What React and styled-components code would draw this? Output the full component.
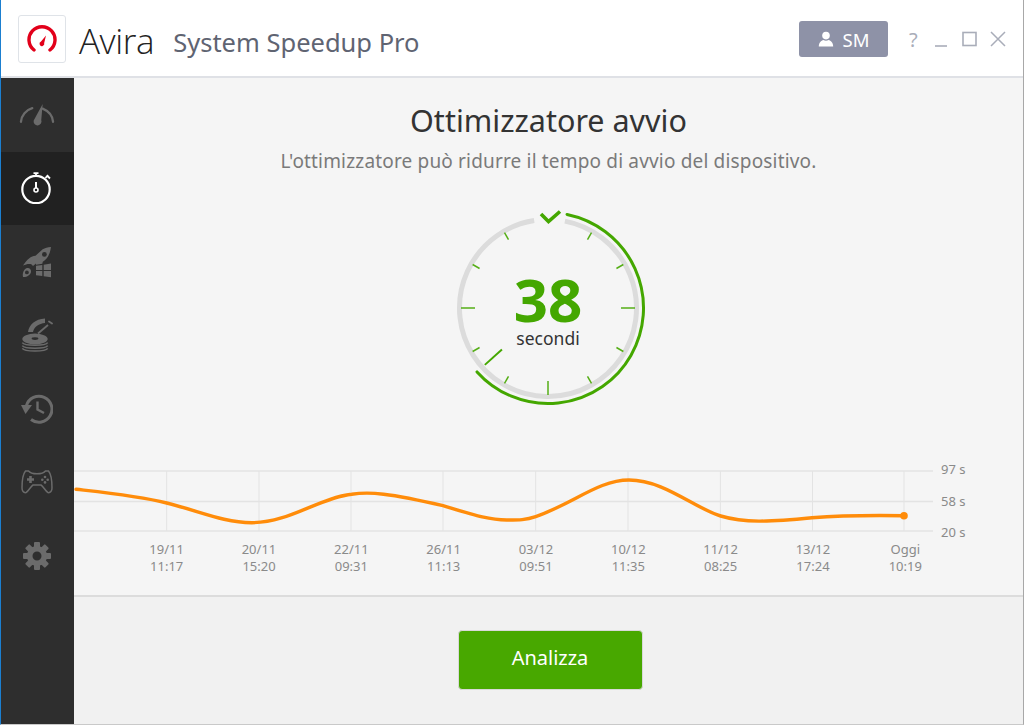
import React from "react";
import styled, { createGlobalStyle } from "styled-components";

const Global = createGlobalStyle`
  html, body { margin: 0; padding: 0; background: #fff; }
  body { font-family: "Noto Sans", "Open Sans", sans-serif; }
  * { box-sizing: border-box; }
`;

const Screen = styled.div`
  width: 1024px; height: 725px; overflow: hidden;
  display: flex; flex-direction: column;
  border-left: 1px solid #1b7fd0;
  border-right: 1px solid #a8a8a8;
  border-bottom: 1px solid #c9c9c9;
  background: #fff;
`;
const Header = styled.header`
  height: 78px; flex: none;
  display: flex; align-items: center;
  padding: 2px 17px 0 17px;
  background: #fff;
  border-bottom: 2px solid #dfe1e6;
`;
const LogoBox = styled.div`
  width: 48px; height: 48px; flex: none;
  border: 1px solid #dfe3e8; border-radius: 3px;
  display: flex; align-items: center; justify-content: center;
  background: #fff;
`;
const Brand = styled.div`
  font-family: "Open Sans", sans-serif; font-weight: 300;
  font-size: 35px; color: #222; margin-left: 13px; letter-spacing: -0.4px;
  transform: translateY(1px);
`;
const Product = styled.div`
  font-size: 25.5px; color: #5f6472; margin-left: 19px;
  transform: translateY(3px);
`;
const Spacer = styled.div` flex: 1; `;
const UserButton = styled.div`
  width: 89px; height: 36px; border-radius: 3px; background: #8e92a7;
  color: #fff; font-size: 18.5px;
  display: flex; align-items: center; justify-content: center; gap: 9px;
`;
const WindowControls = styled.div`
  display: flex; align-items: center; gap: 0; margin-left: 21px; color: #a9adb9;
`;
const HelpMark = styled.span`
  font-size: 20px; width: 25px; color: #a9adb9;
`;
const Body = styled.div`
  flex: 1; display: flex; min-height: 0;
`;
const Sidebar = styled.nav`
  width: 73px; flex: none; background: #2e2e2e;
  display: flex; flex-direction: column;
`;
const NavItem = styled.div`
  height: 73.5px; flex: none; padding-right: 1px;
  display: flex; align-items: center; justify-content: center;
  background: ${p => (p.$active ? "#212121" : "transparent")};
  color: ${p => (p.$active ? "#fff" : "#6b6b6b")};
`;
const Main = styled.main`
  flex: 1; display: flex; flex-direction: column; min-width: 0;
  background: #f5f5f5;
`;
const Content = styled.section`
  height: 519px; flex: none;
  display: flex; flex-direction: column; align-items: center;
  border-bottom: 2px solid #dcdcdc;
  padding-top: 21px;
`;
const Title = styled.h1`
  margin: 0; font-size: 30.5px; font-weight: 400; line-height: 42px; color: #333;
`;
const Subtitle = styled.p`
  margin: 7px 0 0; font-size: 19px; letter-spacing: 0.17px; line-height: 26px; color: #7a7a7a;
`;
const GaugeWrap = styled.div`
  position: relative; width: 200px; height: 200px; margin: 34px 2px 0 0; flex: none;
`;
const GaugeText = styled.div`
  position: absolute; left: 1px; right: 0; top: 64px;
  display: flex; flex-direction: column; align-items: center;
`;
const GaugeValue = styled.div`
  font-size: 60px; line-height: 54px; font-weight: 700; color: #44a700;
`;
const GaugeUnit = styled.div`
  font-size: 17.5px; line-height: 20px; color: #333; margin-top: 2px;
`;
const ChartRow = styled.div`
  align-self: stretch; display: flex; align-items: flex-start; margin-top: 62px; height: 62px;
`;
const ChartSvg = styled.svg`
  width: 859px; height: 62px; flex: none; display: block; overflow: visible;
`;
const YAxis = styled.div`
  margin-left: 8px; height: 79px; margin-top: -9px; display: flex; flex-direction: column;
  justify-content: space-between;
  font-size: 13px; line-height: 16px; color: #8a8a8a;
`;
const XAxis = styled.div`
  align-self: stretch; display: grid;
  grid-template-columns: repeat(9, 92.33px);
  padding-left: 46.5px; margin-top: 8.5px;
`;
const XLabel = styled.div`
  text-align: center; font-size: 13px; line-height: 17px; color: #8a8a8a;
`;
const Footer = styled.footer`
  flex: 1; background: #f1f1f1;
  display: flex; align-items: center; justify-content: center;
`;
const Analyze = styled.button`
  width: 185px; height: 60px; margin: 0 0 2px 3px; padding: 0 0 5px;
  border: 1px solid #d9d9d9; border-radius: 4px;
  background: #48a800; color: #fff; font: inherit; font-size: 20px;
`;

const Logo = () => (
  <svg width="30" height="28" viewBox="0 0 30 28" fill="none">
    <path d="M7 26 A13 13 0 1 1 23 26" stroke="#e2001a" strokeWidth="3.4" strokeLinecap="round" transform="translate(0 -1)" />
    <path d="M14 16.5 L19 10.5 L17.2 18 A2.4 2.4 0 1 1 14 16.5Z" fill="#e2001a" />
  </svg>
);
const UserIcon = () => (
  <svg width="16" height="16" viewBox="0 0 16 16" fill="#fff">
    <circle cx="8" cy="4.6" r="3.8" />
    <path d="M0.8 15.5 C1 11.4 3.2 9.6 5.4 9 C7 10 9 10 10.6 9 C12.8 9.6 15 11.4 15.2 15.5Z" />
  </svg>
);
const Minimize = () => (
  <svg width="26" height="20" viewBox="0 0 26 20"><path d="M1 17H13" stroke="#a9adb9" strokeWidth="1.6" /></svg>
);
const Maximize = () => (
  <svg width="30" height="20" viewBox="0 0 30 20" fill="none"><rect x="3" y="3.5" width="13" height="13" stroke="#a9adb9" strokeWidth="1.6" /></svg>
);
const CloseIcon = () => (
  <svg width="16" height="16" viewBox="0 0 16 16" fill="none"><path d="M1 1L15 15M15 1L1 15" stroke="#a9adb9" strokeWidth="1.5" /></svg>
);

const GaugeNav = () => (
  <svg width="36" height="22.7" viewBox="0 0 38 24" fill="none">
    <path d="M2 20 C2.5 13 7.5 7.5 14 5.5 M25 6 C31 8.5 35.5 13.5 36 20" stroke="currentColor" strokeWidth="2.4" strokeLinecap="round" />
    <path d="M25 1 L23.5 18 A4.2 4.2 0 1 1 15.5 18.5Z" fill="currentColor" />
  </svg>
);
const StopwatchNav = () => (
  <svg width="32" height="32" viewBox="0 0 32 32" fill="none" stroke="currentColor">
    <circle cx="15" cy="17.5" r="13.7" strokeWidth="2.2" />
    <path d="M15 1.5V4M12.5 1.2H17.5M26 3.5L29 6.5M24.5 6L27 3" strokeWidth="1.8" />
    <path d="M15 10V16" strokeWidth="2" />
    <circle cx="15" cy="18" r="2" strokeWidth="1.6" />
  </svg>
);
const RocketNav = () => (
  <svg width="30" height="32" viewBox="0 0 30 32" fill="currentColor">
    <path d="M29 1 C25.5 1.4 23 2 20.7 3.3 L13.5 9.8 C9 10 5 13.5 1 19.6 C4 18 7 17.6 9.3 18.2 L11 20 L14 17.5 L14 18.8 L20.3 17.8 L20.8 15.8 C25.5 13 28 8 29 1Z" />
    <circle cx="22.4" cy="8.4" r="2.4" fill="#2e2e2e" />
    <path d="M5 22 C7.5 21.5 9.5 23.5 9 26 C8.5 29 5 31.2 1 31 C0.2 27 1.8 23 5 22Z" />
    <circle cx="4.9" cy="26.4" r="1.9" fill="#2e2e2e" />
    <path d="M14 19.8L20.3 18.9V24H14Z M21.7 18.7L29 17.5V24H21.7Z M14 25H20.3V30L14 29.2Z M21.7 25H29V31.3L21.7 30.2Z" />
  </svg>
);
const DiskNav = () => (
  <svg width="32" height="34" viewBox="0 0 32 34" fill="none">
    <path d="M7 14 C8 7 14 1 24 0.5 L24 5 C18 5.5 13 9 12 14Z" fill="currentColor" />
    <path d="M15 19 L30 6" stroke="#2e2e2e" strokeWidth="3.6" />
    <ellipse cx="14" cy="21" rx="12.7" ry="5.4" fill="currentColor" />
    <ellipse cx="14" cy="20.6" rx="3.4" ry="1.4" fill="#2e2e2e" />
    <path d="M1.3 24.6 C3.5 28 24.5 28 26.7 24.6 M1.3 27.6 C3.5 31 24.5 31 26.7 27.6 M1.3 30.4 C3.5 34 24.5 34 26.7 30.4" stroke="currentColor" strokeWidth="1.5" />
    <path d="M17 15.5 L27 7" stroke="currentColor" strokeWidth="1.8" />
    <path d="M28 3.5 L31 5.5" stroke="currentColor" strokeWidth="1.8" strokeLinecap="round" />
  </svg>
);
const HistoryNav = () => (
  <svg width="32" height="30" viewBox="0 0 32 30" fill="none" stroke="currentColor" strokeWidth="3">
    <path d="M5.5 11.5 A13 13 0 1 1 10 25.5" />
    <path d="M0 11 L11 11 L4.5 20 Z" fill="currentColor" stroke="none" />
    <path d="M16.5 7.5 V15.5 L23 19" strokeWidth="2.4" />
  </svg>
);
const GamepadNav = () => (
  <svg width="32" height="24" viewBox="0 0 32 24" fill="none" stroke="currentColor">
    <path d="M4.5 1 H7.5 C9 3 11 3.8 16 3.8 C21 3.8 23 3 24.5 1 H27.5 C30 4 31 11 31 18 C31 21 29.5 23 27 22.6 C24 20.5 22 16 20 15 H12 C10 16 8 20.5 5 22.6 C2.5 23 1 21 1 18 C1 11 2 4 4.5 1Z" strokeWidth="1.5" />
    <path d="M6 9.5H13M9.5 6V13" strokeWidth="2.6" />
    <circle cx="24" cy="7" r="1.3" fill="currentColor" stroke="none" />
    <circle cx="24" cy="12.4" r="1.3" fill="currentColor" stroke="none" />
    <circle cx="21.3" cy="9.7" r="1.3" fill="currentColor" stroke="none" />
    <circle cx="26.7" cy="9.7" r="1.3" fill="currentColor" stroke="none" />
  </svg>
);
const GearNav = () => {
  const teeth = [0, 45, 90, 135, 180, 225, 270, 315];
  return (
    <svg width="28" height="28" viewBox="0 0 28 28" fill="currentColor">
      {teeth.map(a => (
        <rect key={a} x="11" y="0" width="6" height="7" rx="1" transform={`rotate(${a} 14 14)`} />
      ))}
      <circle cx="14" cy="14" r="7.3" fill="none" stroke="currentColor" strokeWidth="5.6" />
    </svg>
  );
};

const polar = (r, deg) => {
  const a = (deg * Math.PI) / 180;
  return [100 + r * Math.sin(a), 100 - r * Math.cos(a)];
};
const arc = (r, from, to) => {
  const [x1, y1] = polar(r, from);
  const [x2, y2] = polar(r, to);
  return `M${x1.toFixed(2)} ${y1.toFixed(2)} A${r} ${r} 0 ${to - from > 180 ? 1 : 0} 1 ${x2.toFixed(2)} ${y2.toFixed(2)}`;
};
const TICKS = [30, 60, 90, 120, 150, 180, 210, 240, 270, 300, 330];

const Gauge = () => (
  <svg width="200" height="200" viewBox="0 0 200 200" fill="none">
    <path d={arc(88.5, 11, 351)} stroke="#dcdcdc" strokeWidth="5" />
    <path d={arc(95.5, 11.5, 228)} stroke="#44a700" strokeWidth="3" strokeLinecap="round" />
    {TICKS.map(t => {
      const inner = t % 90 === 0 ? 73 : 79;
      const [x1, y1] = polar(inner, t);
      const [x2, y2] = polar(87, t);
      return <line key={t} x1={x1} y1={y1} x2={x2} y2={y2} stroke="#55ae16" strokeWidth="1.5" />;
    })}
    {(() => {
      const [x1, y1] = polar(62, 228);
      const [x2, y2] = polar(85, 228);
      return <line x1={x1} y1={y1} x2={x2} y2={y2} stroke="#44a700" strokeWidth="2" />;
    })()}
    <path d="M93 6 L100.5 13.5 L112 3.5" stroke="#44a700" strokeWidth="3.6" />
  </svg>
);

const VERTICALS = [92.7, 185, 277, 369, 461.7, 554, 646.4, 738.5, 830];
const CURVE =
  "M2 19.3 C35 23 65 26 92.7 33 C125 41 150 52.7 177.7 52.7 C215 52.7 245 28 277.7 24.3 C295 21.5 315 23 369 35.7 C400 45 415 50 432.7 50 C445 50 452 50 461.7 46.7 C500 33 525 10 555 10 C590 10 620 38 646.7 46 C670 53 695 52 738 47.7 C760 46 785 45 830 45.7";

const Chart = () => (
  <ChartSvg viewBox="0 0 859 62" fill="none">
    {[1, 31.5, 61].map(y => (
      <line key={y} x1="0" x2="859" y1={y} y2={y} stroke="#e3e3e3" strokeWidth="1.5" />
    ))}
    {VERTICALS.map(x => (
      <line key={x} x1={x} x2={x} y1="1" y2="61" stroke="#e3e3e3" strokeWidth="1" />
    ))}
    <path d={CURVE} stroke="#ff8c0a" strokeWidth="3.4" strokeLinecap="round" />
    <circle cx="830" cy="45.7" r="3.8" fill="#ff8c0a" />
  </ChartSvg>
);

const LABELS = [
  ["19/11", "11:17"], ["20/11", "15:20"], ["22/11", "09:31"], ["26/11", "11:13"],
  ["03/12", "09:51"], ["10/12", "11:35"], ["11/12", "08:25"], ["13/12", "17:24"], ["Oggi", "10:19"],
];

export default function App() {
  return (
    <>
      <Global />
      <Screen>
        <Header>
          <LogoBox><Logo /></LogoBox>
          <Brand>Avira</Brand>
          <Product>System Speedup Pro</Product>
          <Spacer />
          <UserButton><UserIcon />SM</UserButton>
          <WindowControls>
            <HelpMark>?</HelpMark>
            <Minimize />
            <Maximize />
            <CloseIcon />
          </WindowControls>
        </Header>
        <Body>
          <Sidebar>
            <NavItem><GaugeNav /></NavItem>
            <NavItem $active><StopwatchNav /></NavItem>
            <NavItem><RocketNav /></NavItem>
            <NavItem><DiskNav /></NavItem>
            <NavItem><HistoryNav /></NavItem>
            <NavItem><GamepadNav /></NavItem>
            <NavItem><GearNav /></NavItem>
          </Sidebar>
          <Main>
            <Content>
              <Title>Ottimizzatore avvio</Title>
              <Subtitle>L'ottimizzatore può ridurre il tempo di avvio del dispositivo.</Subtitle>
              <GaugeWrap>
                <Gauge />
                <GaugeText>
                  <GaugeValue>38</GaugeValue>
                  <GaugeUnit>secondi</GaugeUnit>
                </GaugeText>
              </GaugeWrap>
              <ChartRow>
                <Chart />
                <YAxis><span>97 s</span><span>58 s</span><span>20 s</span></YAxis>
              </ChartRow>
              <XAxis>
                {LABELS.map(([d, t]) => (
                  <XLabel key={d}>{d}<br />{t}</XLabel>
                ))}
              </XAxis>
            </Content>
            <Footer><Analyze>Analizza</Analyze></Footer>
          </Main>
        </Body>
      </Screen>
    </>
  );
}
